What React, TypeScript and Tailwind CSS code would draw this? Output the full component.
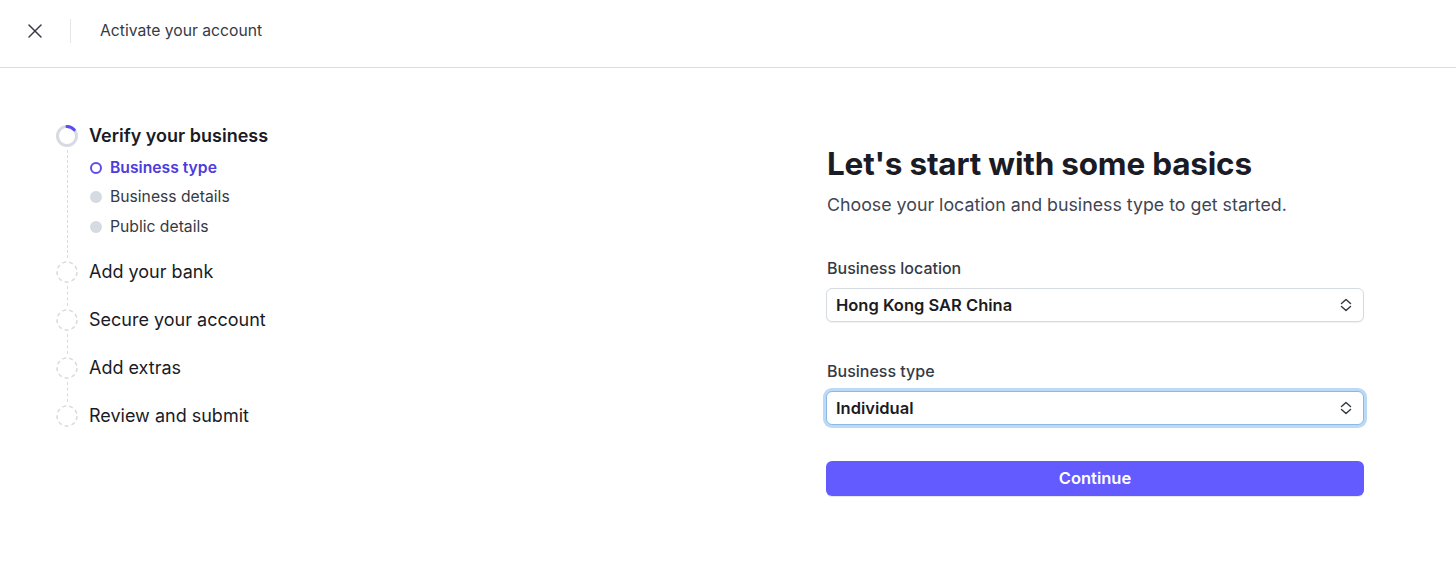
import React from 'react';
import { X } from 'lucide-react';

type Step = { label: string; state: 'active' | 'todo'; subs?: { label: string; active: boolean }[] };

const steps: Step[] = [
  {
    label: 'Verify your business',
    state: 'active',
    subs: [
      { label: 'Business type', active: true },
      { label: 'Business details', active: false },
      { label: 'Public details', active: false },
    ],
  },
  { label: 'Add your bank', state: 'todo' },
  { label: 'Secure your account', state: 'todo' },
  { label: 'Add extras', state: 'todo' },
  { label: 'Review and submit', state: 'todo' },
];

const StepIcon = ({ active }: { active: boolean }) =>
  active ? (
    <svg width="22" height="22" viewBox="0 0 22 22" className="shrink-0">
      <circle cx="11" cy="11" r="9.5" fill="none" stroke="#d5dbe1" strokeWidth="3" />
      <path d="M11 1.5 A9.5 9.5 0 0 1 18.2 4.8" fill="none" stroke="#5b4cf0" strokeWidth="3" strokeLinecap="round" />
    </svg>
  ) : (
    <svg width="22" height="22" viewBox="0 0 22 22" className="shrink-0">
      <circle cx="11" cy="11" r="10" fill="none" stroke="#d5dbe1" strokeWidth="1.5" strokeDasharray="4 3" />
    </svg>
  );

const UpDown = () => (
  <svg width="14" height="14" viewBox="0 0 14 14" className="shrink-0 text-[#353a44]">
    <path d="M2.5 5.5 L7 1.5 L11.5 5.5" fill="none" stroke="currentColor" strokeWidth="1.5" strokeLinecap="round" strokeLinejoin="round" />
    <path d="M2.5 8.5 L7 12.5 L11.5 8.5" fill="none" stroke="currentColor" strokeWidth="1.5" strokeLinecap="round" strokeLinejoin="round" />
  </svg>
);

const Select = ({ value, focused }: { value: string; focused?: boolean }) => (
  <div
    className={`flex h-[34px] items-center justify-between rounded-md bg-white pl-[9px] pr-[10px] ${
      focused
        ? 'border border-[#8ab9e8] shadow-[0_0_0_3px_#bcd9f6]'
        : 'border border-[#d5dbe1] shadow-[0_1px_1px_rgba(0,0,0,0.06)]'
    }`}
  >
    <span className="text-[16.5px] font-semibold text-[#1a1b25]">{value}</span>
    <UpDown />
  </div>
);

const App: React.FC = () => {
  return (
    <div className="min-h-screen bg-white text-[#1a1b25]" style={{ fontFamily: 'Inter, "Noto Sans", sans-serif' }}>
      {/* Header */}
      <header className="flex h-[68px] items-center border-b border-[#d8dde3] pb-[5px]">
        <div className="flex w-[70px] justify-center">
          <X size={24} strokeWidth={1.5} className="text-[#353a44]" />
        </div>
        <div className="h-[24px] w-px bg-[#e3e6ea]" />
        <span className="ml-[29px] text-[15.7px] text-[#353a44]">Activate your account</span>
      </header>

      <main className="flex">
        {/* Stepper */}
        <nav className="w-[826px] pl-[56px] pt-[57px]">
          {steps.map((step, i) => {
            const last = i === steps.length - 1;
            return (
              <div key={step.label} className={`flex ${last ? '' : step.subs ? 'min-h-[136px]' : 'min-h-[48px]'}`}>
                <div className="flex w-[22px] flex-col items-center">
                  <StepIcon active={step.state === 'active'} />
                  {!last && <div className="my-[3px] flex-1 border-l-[1.5px] border-dashed border-[#d5dbe1]" />}
                </div>
                <div className="pl-[11px]">
                  <div
                    className={`text-[18px] leading-[22px] ${
                      step.state === 'active' ? 'font-semibold text-[#1a1b25]' : 'text-[#1a1b25]'
                    }`}
                  >
                    {step.label}
                  </div>
                  {step.subs && (
                    <div className="mt-[6px] pb-[19px]">
                      {step.subs.map((s) => (
                        <div key={s.label} className="flex h-[29.5px] items-center gap-[8px]">
                          {s.active ? (
                            <span className="ml-px h-[12px] w-[12px] rounded-full border-2 border-[#5b4cf0]" />
                          ) : (
                            <span className="ml-px h-[12px] w-[12px] rounded-full bg-[#d5dbe1]" />
                          )}
                          <span
                            className={`text-[15.7px] ${
                              s.active ? 'font-semibold text-[#4c3cdc]' : 'text-[#353a44]'
                            }`}
                          >
                            {s.label}
                          </span>
                        </div>
                      ))}
                    </div>
                  )}
                </div>
              </div>
            );
          })}
        </nav>

        {/* Form */}
        <section className="w-[538px] pt-[77px]">
          <h1 className="ml-px text-[31.5px] font-bold leading-[38px] tracking-[-0.2px] text-[#1a1b25]">
            Let's start with some basics
          </h1>
          <p className="ml-px mt-[10px] text-[17.8px] leading-[24px] text-[#414552]">
            Choose your location and business type to get started.
          </p>

          <div className="mt-[40px]">
            <label className="ml-px block text-[16px] font-medium leading-[22px] text-[#353a44]">Business location</label>
            <div className="mt-[9px]">
              <Select value="Hong Kong SAR China" />
            </div>
          </div>

          <div className="mt-[38px]">
            <label className="ml-px block text-[16px] font-medium leading-[22px] text-[#353a44]">Business type</label>
            <div className="mt-[9px]">
              <Select value="Individual" focused />
            </div>
          </div>

          <button className="mt-[36px] flex h-[35px] w-full items-center justify-center rounded-md bg-[#635bff] text-[16.5px] font-semibold text-white shadow-[0_1px_1px_rgba(0,0,0,0.1)]">
            Continue
          </button>
        </section>
      </main>
    </div>
  );
};

export default App;
